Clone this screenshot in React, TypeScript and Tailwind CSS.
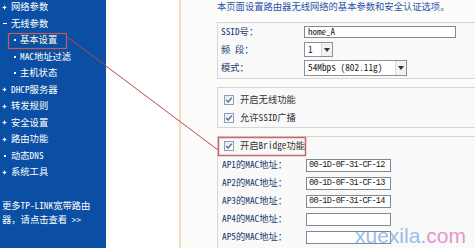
import React from "react";

const sideFont = {
  fontFamily: '"Noto Sans Mono CJK SC", "Noto Sans CJK SC", "DejaVu Sans Mono", monospace',
};

function Plus() {
  return (
    <svg width="5" height="5" viewBox="0 0 5 5" className="shrink-0">
      <path d="M2.5 0 L3.2 1.8 L5 2.5 L3.2 3.2 L2.5 5 L1.8 3.2 L0 2.5 L1.8 1.8 Z" fill="white" />
    </svg>
  );
}

function Dot() {
  return <span className="w-[2px] h-[2px] bg-white shrink-0" />;
}

function Dash() {
  return <span className="w-[4px] h-[1px] bg-white shrink-0" />;
}

function Check() {
  return (
    <span className="w-[10px] h-[10px] border border-[#8ea0b8] bg-gradient-to-br from-[#e4e8ee] to-white flex items-center justify-center shrink-0">
      <svg width="8" height="8" viewBox="0 0 8 8">
        <path d="M1.2 4 L3.2 6 L6.8 1.6" stroke="#5b6f93" strokeWidth="1.5" fill="none" />
      </svg>
    </span>
  );
}

function Arrow() {
  return (
    <span className="w-[11px] self-stretch flex items-center justify-center bg-[#f2f2f2] border-l border-[#d8d8d8]">
      <svg width="6" height="4" viewBox="0 0 6 4">
        <path d="M0 0 H6 L3 4 Z" fill="#333" />
      </svg>
    </span>
  );
}

export default function App() {
  const top = [
    { b: "plus", t: "网络参数" },
    { b: "dash", t: "无线参数" },
    { b: "sub", t: "基本设置", sel: true },
    { b: "sub", t: "MAC地址过滤" },
    { b: "sub", t: "主机状态" },
    { b: "plus", t: "DHCP服务器" },
    { b: "plus", t: "转发规则" },
    { b: "plus", t: "安全设置" },
    { b: "plus", t: "路由功能" },
    { b: "dot", t: "动态DNS" },
    { b: "plus", t: "系统工具" },
  ];
  const macs = ["00-1D-0F-31-CF-12", "00-1D-0F-31-CF-13", "00-1D-0F-31-CF-14", "", ""];

  return (
    <div className="relative w-[475px] h-[248px] overflow-hidden flex bg-white" style={sideFont}>
      <aside className="w-[106px] shrink-0 bg-[#0a4fa4] text-white text-[9.3px] flex flex-col">
        <div className="-mt-[1px] flex flex-col">
          {top.map((it, i) => (
            <div key={i} className="h-[16.5px] flex items-center">
              {it.b === "sub" ? (
                <div className="flex items-center pl-[14px] gap-[4px]">
                  <Dot />
                  <span className={it.sel ? "text-[#fffbe0]" : ""}>{it.t}</span>
                </div>
              ) : (
                <div className="flex items-center pl-[2px] gap-[4px]">
                  <span className="w-[5px] flex items-center justify-center">
                    {it.b === "plus" ? <Plus /> : it.b === "dash" ? <Dash /> : <Dot />}
                  </span>
                  <span>{it.t}</span>
                </div>
              )}
            </div>
          ))}
        </div>
        <div className="mt-[17px] pl-[2px] leading-[14px]">
          <div>更多TP-LINK宽带路由</div>
          <div>器，请点击查看 &gt;&gt;</div>
        </div>
      </aside>
      <div className="w-[73px] shrink-0 bg-white" />
      <main className="flex-1 min-w-0 border-l-2 border-[#f2dbbf] bg-[#fcfcfb] pl-[36px] text-[9.3px] flex flex-col">
        <div className="h-[12px] leading-[12px] text-[#2a56a8] whitespace-nowrap">
          本页面设置路由器无线网络的基本参数和安全认证选项。
        </div>
        <div className="mt-[10px] -mr-[4px] border border-[#d6d6d6] bg-[#f9f9f9] pt-[3px] pb-[2px] pl-[3px] flex flex-col gap-[3px] text-[#22396e]">
          <div className="h-[12px] flex items-center">
            <span className="w-[83px]">SSID号：</span>
            <span className="w-[152px] h-[12px] border border-[#7f8995] bg-white flex items-center pl-[3px] text-[#222] text-[9px]">
              home_A
            </span>
          </div>
          <div className="h-[15px] mt-[1px] flex items-center">
            <span className="w-[83px]">频 段：</span>
            <span className="w-[29px] h-[15px] border border-[#8a939d] bg-white flex items-center text-[#222]">
              <span className="flex-1 pl-[3px]">1</span>
              <Arrow />
            </span>
          </div>
          <div className="h-[16px] flex items-center">
            <span className="w-[83px]">模式：</span>
            <span className="w-[103px] h-[16px] border border-[#8a939d] bg-white flex items-center text-[#222]">
              <span className="flex-1 pl-[3px] whitespace-nowrap">54Mbps (802.11g)</span>
              <Arrow />
            </span>
          </div>
        </div>
        <div className="mt-[8px] -mr-[4px] border border-[#d6d6d6] bg-[#f9f9f9] pt-[5px] pb-[2px] pl-[6px] flex flex-col gap-[4px] text-[#333]">
          <div className="h-[14px] flex items-center gap-[6px]">
            <Check />
            <span>开启无线功能</span>
          </div>
          <div className="h-[14px] flex items-center gap-[6px]">
            <Check />
            <span>允许SSID广播</span>
          </div>
        </div>
        <div className="mt-[8px] -mr-[4px] border border-[#d6d6d6] border-b-0 bg-[#f9f9f9] pt-[1px] flex flex-col flex-1">
          <div className="h-[16px] flex items-center gap-[6px] pl-[6px] text-[#333]">
            <Check />
            <span>开启Bridge功能</span>
          </div>
          <div className="mt-[2px] flex flex-col text-[#22396e]">
            {macs.map((m, i) => (
              <div key={i} className="h-[18px] flex items-center pl-[4px]">
                <span className="w-[84px] whitespace-nowrap">AP{i + 1}的MAC地址：</span>
                <span
                  className="w-[85px] h-[13px] border border-[#7f8995] bg-white flex items-center pl-[2px] text-[#222] text-[8.6px] tracking-[-0.7px] whitespace-nowrap overflow-hidden"
                  style={{ fontFamily: '"Liberation Mono", monospace' }}
                >
                  {m}
                </span>
              </div>
            ))}
          </div>
        </div>
      </main>

      <svg className="absolute inset-0 pointer-events-none" width="475" height="248">
        <rect x="8.5" y="33.5" width="58" height="15" fill="none" stroke="#c45b5b" strokeWidth="1.2" />
        <line x1="66" y1="36" x2="218" y2="150" stroke="#b94b4b" strokeWidth="1" />
        <rect x="218.5" y="137.5" width="87" height="18" fill="none" stroke="#c46a6a" strokeWidth="1.5" />
      </svg>

      <div
        className="absolute left-[355px] top-[225px] text-[21px] leading-none whitespace-nowrap opacity-80"
        style={{ fontFamily: '"Liberation Sans", Arial, sans-serif' }}
      >
        <span className="text-[#7fb0e2]">xuexila</span>
        <span className="text-[#e27cbe]">.com</span>
      </div>
    </div>
  );
}
